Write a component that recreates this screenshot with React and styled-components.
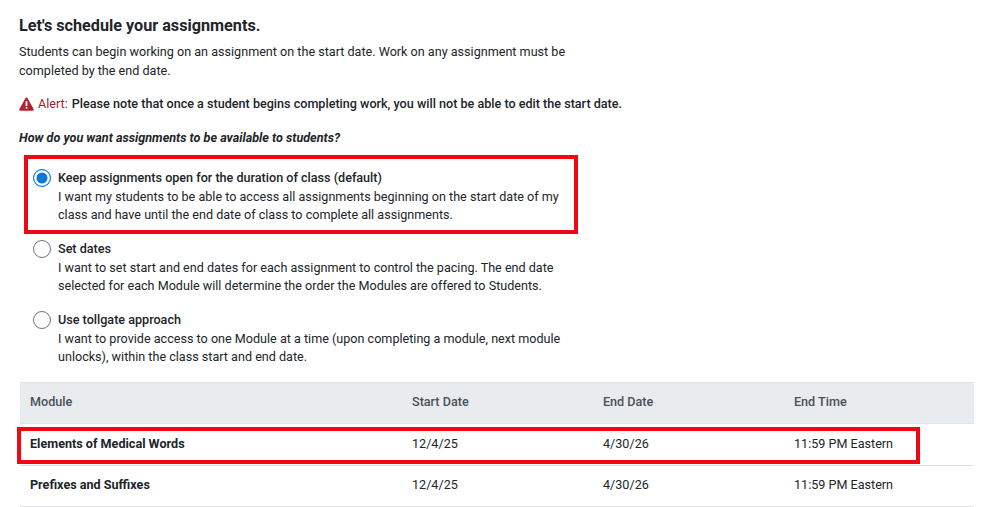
import React from 'react';
import styled, { createGlobalStyle } from 'styled-components';

const options = [
  {
    title: 'Keep assignments open for the duration of class (default)',
    lines: 'I want my students to be able to access all assignments beginning on the start date of my class and have until the end date of class to complete all assignments.',
    checked: true,
  },
  {
    title: 'Set dates',
    lines: 'I want to set start and end dates for each assignment to control the pacing. The end date selected for each Module will determine the order the Modules are offered to Students.',
  },
  {
    title: 'Use tollgate approach',
    lines: 'I want to provide access to one Module at a time (upon completing a module, next module unlocks), within the class start and end date.',
  },
];

const modules = [
  { name: 'Elements of Medical Words', start: '12/4/25', end: '4/30/26', time: '11:59 PM Eastern' },
  { name: 'Prefixes and Suffixes', start: '12/4/25', end: '4/30/26', time: '11:59 PM Eastern' },
];

function App() {
  return (
    <Page>
      <GlobalStyle />
      <Heading>Let's schedule your assignments.</Heading>
      <Intro>
        Students can begin working on an assignment on the start date. Work on any assignment must be completed by the end date.
      </Intro>
      <AlertLine>
        <svg width="15" height="14" viewBox="0 0 15 14" aria-hidden="true">
          <path d="M7.5 0.6c.5 0 .9.3 1.1.7l6 10.6c.5.8-.1 1.8-1.1 1.8H1.5c-1 0-1.6-1-1.1-1.8l6-10.6c.2-.4.6-.7 1.1-.7z" fill="#b5202e" />
          <rect x="6.6" y="4.2" width="1.8" height="5" rx=".6" fill="#fff" />
          <rect x="6.6" y="10" width="1.8" height="1.8" rx=".6" fill="#fff" />
        </svg>
        <AlertLabel>Alert:</AlertLabel> Please note that once a student begins completing work, you will not be able to edit the start date.
      </AlertLine>
      <Question>How do you want assignments to be available to students?</Question>
      <OptionList>
        {options.map((o) => (
          <Option key={o.title}>
            <Radio $checked={o.checked} />
            <div>
              <OptionTitle>{o.title}</OptionTitle>
              <div>{o.lines}</div>
            </div>
          </Option>
        ))}
      </OptionList>
      <Table>
        <thead>
          <tr>
            <Th $width={382}>Module</Th>
            <Th $width={191}>Start Date</Th>
            <Th $width={191}>End Date</Th>
            <Th $width={190}>End Time</Th>
          </tr>
        </thead>
        <tbody>
          {modules.map((m) => (
            <Row key={m.name}>
              <NameCell>{m.name}</NameCell>
              <Td>{m.start}</Td>
              <Td>{m.end}</Td>
              <Td>{m.time}</Td>
            </Row>
          ))}
        </tbody>
      </Table>
      <Highlight $top={155} $left={24} $width={554} $height={79} />
      <Highlight $top={427} $left={17} $width={903} $height={37} />
    </Page>
  );
}

const GlobalStyle = createGlobalStyle`
  html, body {
    margin: 0;
    background: #fff;
  }
`;

const Page = styled.div`
  position: relative;
  box-sizing: border-box;
  width: 1004px;
  height: 507px;
  padding: 16px 30px 0 19px;
  overflow: hidden;
  font-family: Roboto, sans-serif;
  font-size: 12.6px;
  line-height: 18.9px;
  color: #212529;
`;

const Heading = styled.h2`
  margin: 0 0 7px;
  font-size: 16.2px;
  line-height: 20px;
  font-weight: 700;
`;

const Intro = styled.p`
  margin: 0;
  width: 560px;
`;

const AlertLine = styled.div`
  display: flex;
  align-items: center;
  margin-top: 14px;
  font-weight: 500;
  white-space: pre;

  svg {
    margin-right: 4px;
  }
`;

const AlertLabel = styled.span`
  color: #a6192e;
  font-weight: 400;
  margin-right: 1px;
`;

const Question = styled.div`
  margin-top: 15px;
  font-style: italic;
  font-weight: 700;
`;

const OptionList = styled.div`
  display: flex;
  flex-direction: column;
  gap: 14.3px;
  margin-top: 21px;
  padding-left: 14px;
`;

const Option = styled.div`
  display: flex;
  gap: 7px;
  width: 530px;
`;

const Radio = styled.span`
  box-sizing: border-box;
  flex: none;
  width: 18px;
  height: 18px;
  border-radius: 50%;
  border: 1.5px solid ${(p) => (p.$checked ? '#0d7fd9' : '#6c757d')};
  background: ${(p) => (p.$checked ? '#0a78d6' : '#fff')};
  box-shadow: ${(p) => (p.$checked ? 'inset 0 0 0 2.5px #fff' : 'none')};
`;

const OptionTitle = styled.div`
  font-weight: 500;
`;

const Table = styled.table`
  width: 954px;
  margin: 15px 0 0 1px;
  border-collapse: collapse;
  table-layout: fixed;
`;

const Th = styled.th`
  box-sizing: border-box;
  width: ${(p) => p.$width}px;
  height: 41px;
  padding: 0 10px 2px;
  text-align: left;
  font-size: 12.6px;
  font-weight: 500;
  color: #495057;
  background: #e9ecef;
  border-top: 1px solid #dee2e6;
  border-bottom: 1px solid #dee2e6;
`;

const Td = styled.td`
  box-sizing: border-box;
  height: 41.5px;
  padding: 0 10px;
  border-bottom: 1px solid #dee2e6;
`;

const NameCell = styled(Td)`
  font-weight: 700;
`;

const Row = styled.tr`
  &:last-child td {
    padding-bottom: 2px;
  }
`;

// red annotation boxes drawn on top of the screenshot
const Highlight = styled.div`
  position: absolute;
  box-sizing: border-box;
  top: ${(p) => p.$top}px;
  left: ${(p) => p.$left}px;
  width: ${(p) => p.$width}px;
  height: ${(p) => p.$height}px;
  border: 4px solid #f00615;
`;

export default App;
